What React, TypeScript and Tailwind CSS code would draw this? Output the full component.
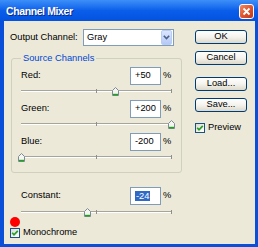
import React from "react";

const font = "font-['Liberation_Sans',Arial,sans-serif]";

function Thumb() {
  return (
    <svg width="7" height="9" viewBox="0 0 7 9">
      <path d="M0.5 3.5 L3.5 0.5 L6.5 3.5 V8.5 H0.5 Z" fill="#f6f6f1" stroke="#7d8b96" />
      <path d="M1 7.6 H6" stroke="#21a121" strokeWidth="1.6" />
    </svg>
  );
}

function Slider({ value, top = 5, height = 15 }: { value: number; top?: number; height?: number }) {
  const pos = ((value + 200) / 400) * 150;
  return (
    <div className="relative" style={{ height, paddingTop: top }}>
      <div className="h-[2px] border-t border-[#a5a49d] bg-white" />
      <div className="absolute w-px h-[4px] bg-[#8e8e8a]" style={{ left: 75, top: top - 1 }} />
      <div className="absolute w-px h-[4px] bg-[#8e8e8a]" style={{ left: 150, top: top - 1 }} />
      <div className="absolute" style={{ left: pos - 3, top: top - 3 }}>
        <Thumb />
      </div>
    </div>
  );
}

function Checkbox({ label }: { label: string }) {
  return (
    <div className="flex items-center h-[10px]">
      <div className="w-[10px] h-[10px] border border-[#1c5180] bg-linear-to-br from-[#dcdcd6] to-white flex items-center justify-center">
        <svg width="8" height="8" viewBox="0 0 8 8">
          <path d="M1.2 3.8 L3 5.8 L6.8 1.8" fill="none" stroke="#21a121" strokeWidth="1.7" />
        </svg>
      </div>
      <span className="ml-[3px]">{label}</span>
    </div>
  );
}

function Button({ children }: { children: React.ReactNode }) {
  return (
    <div className="w-[52px] h-[14px] rounded-[3px] border border-[#003c74] bg-linear-to-b from-white via-[#f4f3ee] to-[#dcd8cb] flex items-center justify-center leading-none">
      {children}
    </div>
  );
}

function ValueRow({ label, value, selected }: { label: string; value: string; selected?: boolean }) {
  return (
    <div className="flex items-center h-[18px]">
      <span className="w-[109px]">{label}</span>
      <div className="w-[31px] h-[18px] border border-[#7f9db9] bg-white flex items-center pl-[4px]">
        {selected ? <span className="bg-[#316ac5] text-white px-px leading-[10px]">{value}</span> : value}
      </div>
      <span className="ml-[2px]">%</span>
    </div>
  );
}

const channels = [
  { label: "Red:", value: 50 },
  { label: "Green:", value: 200 },
  { label: "Blue:", value: -200 },
];

export default function App() {
  return (
    <div className={`w-[258px] h-[247px] flex flex-col bg-[#0a4fd8] ${font} text-[9.3px] text-black`}>
      <div className="h-[21px] shrink-0 flex items-center justify-between pl-[6px] pr-[4px] bg-linear-to-b from-[#3d8ff8] via-[#0a5eea] to-[#0352e0]">
        <span className="pt-[2px] text-white font-bold text-[10.5px] tracking-[-0.4px] [text-shadow:1px_1px_0_#0b2a8c]">
          Channel Mixer
        </span>
        <div className="mt-[1px] w-[15px] h-[15px] rounded-[3px] border border-white bg-linear-to-br from-[#f08a64] via-[#e0552e] to-[#c2361a] flex items-center justify-center">
          <svg width="9" height="9" viewBox="0 0 9 9">
            <path d="M1.5 1.5 L7.5 7.5 M7.5 1.5 L1.5 7.5" stroke="white" strokeWidth="1.8" />
          </svg>
        </div>
      </div>

      <div className="flex-1 flex ml-[4px] mr-[3px] mb-[3px] bg-[#ece9d8]">
        <div className="w-[191px] pl-[6px] pt-[8px] flex flex-col">
          <div className="flex items-center h-[17px]">
            <span className="w-[73px]">Output Channel:</span>
            <div className="w-[91px] h-[17px] border border-[#7f9db9] bg-white flex items-center justify-between pl-[3px] pr-px">
              <span>Gray</span>
              <div className="w-[11px] h-[15px] rounded-[2px] border border-[#b9ccf4] bg-linear-to-b from-[#dbe6fe] to-[#b5c9f7] flex items-center justify-center">
                <svg width="7" height="5" viewBox="0 0 7 5">
                  <path d="M0.8 0.8 L3.5 3.6 L6.2 0.8" fill="none" stroke="#4d6185" strokeWidth="1.6" />
                </svg>
              </div>
            </div>
          </div>

          <fieldset className="mt-[6px] ml-px w-[171px] border border-[#d0d0bf] rounded-[3px] px-[9px] pb-[6px]">
            <legend className="px-[2px] leading-[13px] text-[#0046d5]">Source Channels</legend>
            <div className="pt-[2px]">
              {channels.map(c => (
                <div key={c.label}>
                  <ValueRow label={c.label} value={c.value > 0 ? `+${c.value}` : `${c.value}`} />
                  <Slider value={c.value} />
                </div>
              ))}
            </div>
          </fieldset>

          <div className="mt-[14px] ml-[11px] w-[151px]">
            <ValueRow label="Constant:" value="-24" selected />
            <Slider value={-24} top={6} height={12} />
          </div>

          <div className="w-[10px] h-[10px] rounded-full bg-[#ff0000]" />
          <div className="mt-px">
            <Checkbox label="Monochrome" />
          </div>
        </div>

        <div className="w-[52px] pt-[9px] flex flex-col">
          <Button>OK</Button>
          <div className="mt-[7px]"><Button>Cancel</Button></div>
          <div className="mt-[12px]"><Button>Load...</Button></div>
          <div className="mt-[7px]"><Button>Save...</Button></div>
          <div className="mt-[11px]"><Checkbox label="Preview" /></div>
        </div>
      </div>
    </div>
  );
}
